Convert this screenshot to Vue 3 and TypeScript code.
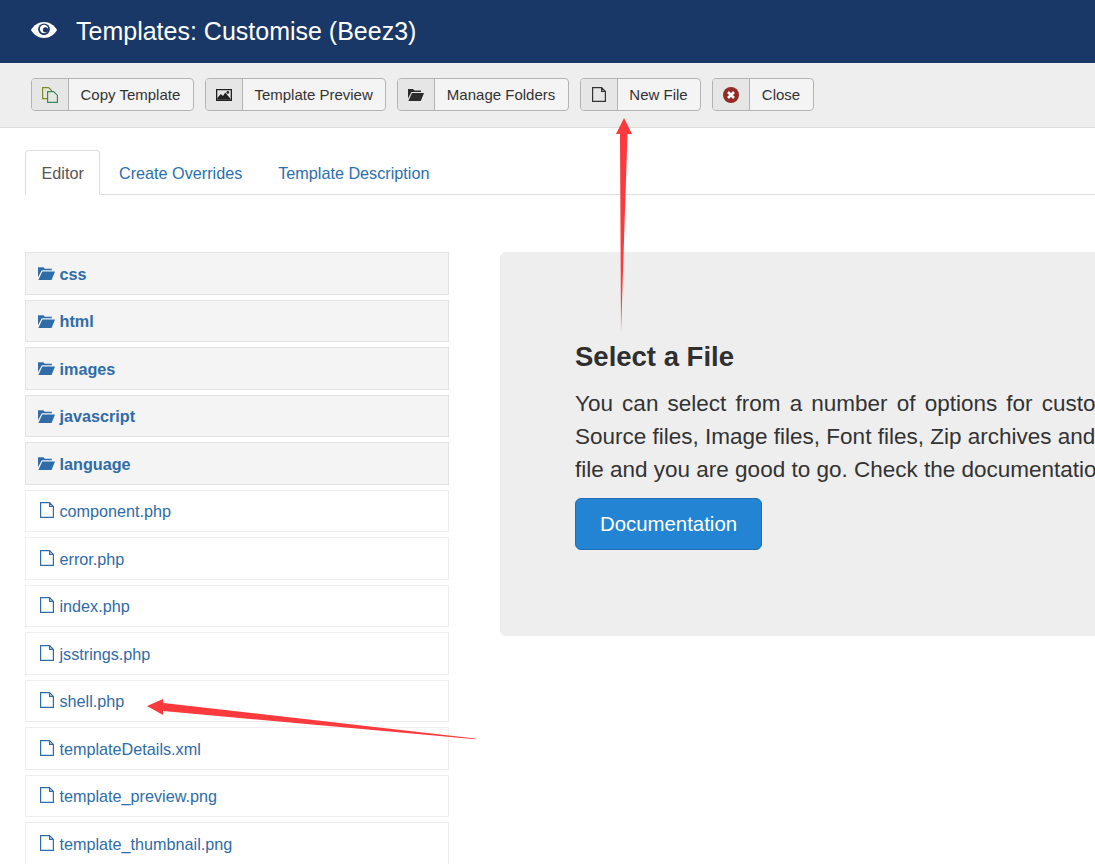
<script setup lang="ts">
const buttons = [
  { label: 'Copy Template', icon: 'copy' },
  { label: 'Template Preview', icon: 'picture' },
  { label: 'Manage Folders', icon: 'folder' },
  { label: 'New File', icon: 'file' },
  { label: 'Close', icon: 'close' },
]

const tabs = ['Create Overrides', 'Template Description']
const folders = ['css', 'html', 'images', 'javascript', 'language']
const files = [
  'component.php',
  'error.php',
  'index.php',
  'jsstrings.php',
  'shell.php',
  'templateDetails.xml',
  'template_preview.png',
  'template_thumbnail.png',
]
</script>

<template>
  <div class="page">
    <header class="title-bar">
      <svg class="eye" viewBox="0 0 26 16" width="26" height="16">
        <path fill="#fff" d="M13 0C7.500 0 2.800 3.200 0 8c2.800 4.800 7.500 8 13 8s10.200-3.200 13-8c-2.800-4.800-7.500-8-13-8z" />
        <circle cx="13" cy="7.500" r="6" fill="#1a3867" />
        <path fill="#fff" d="M2.800 8c1.400-2.200 3.300-3.900 5.500-5C7.500 4.100 7 5.400 7 7c0 3.300 2.700 6 6 6s6-2.700 6-6c0-1.600-.5-2.900-1.300-4 2.200 1.100 4.100 2.800 5.500 5-2.500 3.900-6 6-10.200 6S5.300 11.900 2.800 8z" />
        <circle cx="13" cy="7" r="4.200" fill="#fff" />
        <circle cx="14.500" cy="7.800" r="2.600" fill="#1a3867" />
      </svg>
      <h1>Templates: Customise (Beez3)</h1>
    </header>

    <div class="toolbar">
      <button v-for="b in buttons" :key="b.label" class="tool-btn">
        <span class="tool-icon">
          <svg v-if="b.icon === 'copy'" viewBox="0 0 16 16" width="16" height="16">
            <path fill="#e6e6e6" stroke="#7d8a2a" stroke-width="1.200" d="M.6.6h6l3 3v8H.6z" />
            <path fill="#e6e6e6" stroke="#3c8a58" stroke-width="1.200" d="M5.600 4.600h6l3.800 3.800v7H5.600z" />
          </svg>
          <svg v-else-if="b.icon === 'picture'" viewBox="0 0 16 12" width="16" height="12">
            <path fill="#222" fill-rule="evenodd" d="M0 0h16v12H0zM1.300 1.300v9.400h13.400V1.300z" />
            <path fill="#222" d="M1.300 10.700V9l3.500-4 2.200 2 2.200-3.500 5.500 6.500v.7z" />
            <circle cx="11.800" cy="3.400" r="1.300" fill="#222" />
          </svg>
          <svg v-else-if="b.icon === 'folder'" viewBox="0 0 16 13" width="16" height="13">
            <path fill="#2b2b2b" d="M0 1h5l1.500 1.500H13V4H3.500L0 10.500zM4 5h12l-3.200 8H.4z" />
          </svg>
          <svg v-else-if="b.icon === 'file'" viewBox="0 0 14 15" width="14" height="15">
            <path fill="none" stroke="#333" stroke-width="1.200" d="M.6.6h9l3.800 3.800v10H.6zM9.600.6v3.800h3.800" />
          </svg>
          <svg v-else viewBox="0 0 16 16" width="16" height="16">
            <circle cx="8" cy="8" r="8" fill="#942a25" />
            <path stroke="#fff" stroke-width="2.600" d="M5 5l6 6M11 5l-6 6" />
          </svg>
        </span>
        <span class="tool-label">{{ b.label }}</span>
      </button>
    </div>

    <main class="content">
      <nav class="tabs">
        <span class="tab active">Editor</span>
        <a v-for="t in tabs" :key="t" class="tab">{{ t }}</a>
      </nav>

      <div class="columns">
        <ul class="tree">
          <li v-for="f in folders" :key="f" class="row folder">
            <svg viewBox="0 0 16 13" width="17" height="14">
              <path fill="#2f6ca8" d="M0 1h5l1.500 1.500H13V4H3.500L0 10.500zM4 5h12l-3.200 8H.4z" />
            </svg>
            {{ f }}
          </li>
          <li v-for="f in files" :key="f" class="row file">
            <svg viewBox="0 0 14 16" width="14" height="16">
              <path fill="none" stroke="#2f6ca8" stroke-width="1.200" d="M.6.6h9l3.800 3.800v11H.6zM9.600.6v3.800h3.800" />
            </svg>
            {{ f }}
          </li>
        </ul>

        <section class="panel">
          <h2>Select a File</h2>
          <p>
            <span class="first-line">You can select from a number of options for customising your template.</span>
            <span>Source files, Image files, Font files, Zip archives and other assets can be edited. Select a</span>
            <span>file and you are good to go. Check the documentation for more details.</span>
          </p>
          <button class="doc-btn">Documentation</button>
        </section>
      </div>
    </main>

    <svg class="arrows" width="1095" height="864" viewBox="0 0 1095 864">
      <path fill="#fb3a3e" d="M624 118L632 134H627.500L621 332 620 134H616z" />
      <path fill="#fb3a3e" d="M147 706L163 699 163.500 703 475.500 738.500 475.500 739.300 163 711 163 715z" />
    </svg>
  </div>
</template>

<style>
html, body {
  margin: 0;
  overflow: hidden;
}
</style>

<style scoped>
.page {
  position: relative;
  width: 1095px;
  height: 864px;
  overflow: hidden;
  background: #fff;
  font-family: "Liberation Sans", Arial, sans-serif;
  color: #333;
}

.title-bar {
  height: 63px;
  box-sizing: border-box;
  padding-left: 31px;
  display: flex;
  align-items: center;
  background: #1a3867;
  color: #fff;
}
.eye {
  margin-right: 19px;
  margin-top: -4px;
}
.title-bar h1 {
  margin: 0;
  font-size: 25px;
  font-weight: 400;
}

.toolbar {
  height: 65px;
  box-sizing: border-box;
  padding: 15px 31px 0;
  display: flex;
  align-items: flex-start;
  gap: 11.100px;
  background: #eee;
  border-bottom: 1px solid #ddd;
}
.tool-btn {
  height: 33px;
  padding: 0;
  display: flex;
  align-items: stretch;
  background: #f4f4f4;
  border: 1px solid #b3b3b3;
  border-radius: 4px;
  font: 15px "Liberation Sans", Arial, sans-serif;
  color: #333;
}
.tool-icon {
  width: 36px;
  display: flex;
  align-items: center;
  justify-content: center;
  background: #e6e6e6;
  border-right: 1px solid #b3b3b3;
  border-radius: 3px 0 0 3px;
}
.tool-label {
  padding: 0 12.500px 0 11.500px;
  line-height: 32px;
}

.content {
  padding: 22px 0 0 25px;
}

.tabs {
  height: 45px;
  box-sizing: border-box;
  display: flex;
  border-bottom: 1px solid #ddd;
  font-size: 16.200px;
}
.tab {
  padding: 14px 18px 0;
  color: #2a6fb0;
}
.tab.active {
  height: 45px;
  width: 75px;
  box-sizing: border-box;
  padding: 13px 0 0 15.500px;
  margin-right: 1px;
  color: #555;
  background: #fff;
  border: 1px solid #ddd;
  border-bottom-color: #fff;
  border-radius: 4px 4px 0 0;
}

.columns {
  margin-top: 57px;
  display: flex;
  gap: 51px;
}

.tree {
  width: 424px;
  flex: none;
  margin: 0;
  padding: 0;
  list-style: none;
  display: flex;
  flex-direction: column;
  gap: 5px;
}
.row {
  height: 42.500px;
  box-sizing: border-box;
  padding-top: 2px;
  display: flex;
  align-items: center;
  border: 1.500px solid #eee;
  font-size: 16.200px;
  color: #2f6ca8;
}
.row svg {
  flex: none;
}
.folder {
  padding-left: 11.500px;
  gap: 5px;
  background: #f4f4f4;
  border-color: #e3e3e3;
  font-weight: 700;
}
.folder svg {
  margin-top: -2.500px;
}
.file {
  padding-left: 13.500px;
  gap: 6px;
}
.file svg {
  margin-top: -3px;
}

.panel {
  width: 780px;
  height: 384px;
  flex: none;
  box-sizing: border-box;
  padding: 89px 75px 0;
  background: #eee;
  border-radius: 6px;
}
.panel h2 {
  margin: 0;
  font-size: 27.500px;
  line-height: 32px;
  color: #2f2f2f;
}
.panel p {
  margin: 14px 0 0;
  font-size: 22.500px;
  line-height: 33px;
  white-space: nowrap;
}
.panel p span {
  display: block;
}
.panel p .first-line {
  word-spacing: 2.900px;
}
.doc-btn {
  margin-top: 12px;
  width: 187px;
  height: 52px;
  padding: 0;
  background: #2384d3;
  border: 1px solid #1f6db0;
  border-radius: 6px;
  font: 20.400px "Liberation Sans", Arial, sans-serif;
  color: #fff;
}

.arrows {
  position: absolute;
  left: 0;
  top: 0;
  pointer-events: none;
}
</style>
